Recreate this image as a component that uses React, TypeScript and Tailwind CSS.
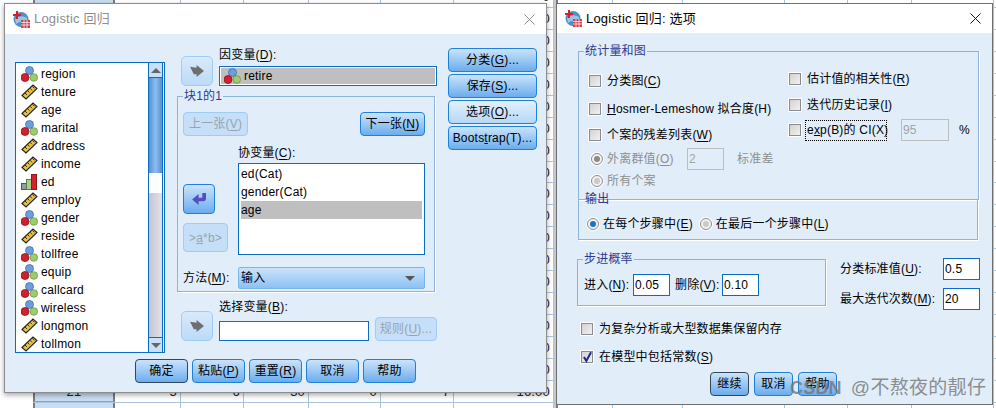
import React from "react";

const font = "font-['Liberation_Sans','Noto_Sans_CJK_SC',sans-serif] tracking-[0.2px]";

const sheetRows = Array.from({ length: 20 }, (_, i) => i);
const sheetColumns = ["w-[66px]", "w-[63px]", "w-[65px]", "w-[72px]", "w-[73px]", "w-[100px]"];
const sheetRight = ["w-[55px]", "w-[70px]", "w-[102px]", "w-[63px]", "w-[64px]", "w-[82px]"];

const BallsIcon = ({ className = "" }: { className?: string }) => (
  <svg viewBox="0 0 17 16" className={`w-[17px] h-[16px] shrink-0 ${className}`}>
    <circle cx="8.5" cy="4.5" r="4" fill="#6b9fdc" stroke="#3f6fb0" strokeWidth="0.8" />
    <circle cx="4" cy="11.5" r="4" fill="#d3202c" stroke="#8f1520" strokeWidth="0.8" />
    <circle cx="12.8" cy="11.5" r="3.8" fill="#9fcb6d" stroke="#6b9a45" strokeWidth="0.8" />
  </svg>
);

const RulerIcon = () => (
  <svg viewBox="0 0 17 16" className="w-[17px] h-[16px] shrink-0">
    <path d="M1 11.5 L12 1 L16 4.5 L5 15 Z" fill="#e8c23a" stroke="#222" strokeWidth="1.1" />
    <path d="M4 9 L6 11 M6.5 6.5 L8.5 8.5 M9 4.3 L11 6.3 M11.4 2.3 L13.4 4.3" stroke="#222" strokeWidth="0.9" />
  </svg>
);

const BarsIcon = () => (
  <svg viewBox="0 0 17 16" className="w-[17px] h-[16px] shrink-0">
    <rect x="0.5" y="9.5" width="5" height="6" fill="#8d9aa8" stroke="#4d5560" />
    <rect x="5.5" y="5.5" width="5" height="10" fill="#a8cf86" stroke="#5d7f45" />
    <rect x="10.5" y="0.5" width="5" height="15" fill="#d6202c" stroke="#8f1520" />
  </svg>
);

const variables: [string, "n" | "r" | "b"][] = [
  ["region", "n"],
  ["tenure", "r"],
  ["age", "r"],
  ["marital", "n"],
  ["address", "r"],
  ["income", "r"],
  ["ed", "b"],
  ["employ", "r"],
  ["gender", "n"],
  ["reside", "r"],
  ["tollfree", "n"],
  ["equip", "n"],
  ["callcard", "n"],
  ["wireless", "n"],
  ["longmon", "r"],
  ["tollmon", "r"],
];

const AppIcon = () => (
  <svg viewBox="0 0 17 17" className="w-[17px] h-[17px] shrink-0">
    <circle cx="8" cy="8.5" r="7.5" fill="#4f8fc4" />
    <path d="M2 8 Q8 3 14 7 L14 12 Q8 9 3 13 Z" fill="#9cc3e2" />
    <rect x="3" y="0" width="2" height="8" fill="#d3202c" />
    <rect x="0" y="3" width="8" height="2" fill="#d3202c" />
    <rect x="8" y="9" width="9" height="8" fill="#d3404c" />
    <path d="M8 11.5 H17 M8 14 H17 M11 9 V17 M14 9 V17" stroke="#fff" strokeWidth="0.7" />
  </svg>
);

const CloseIcon = ({ color }: { color: string }) => (
  <svg viewBox="0 0 11 11" className="w-[11px] h-[11px]">
    <path d="M0.5 0.5 L10.5 10.5 M10.5 0.5 L0.5 10.5" stroke={color} strokeWidth="1" />
  </svg>
);

// label with its underlined mnemonic, e.g. 保存(S)
const Mn = ({ before, k, after = "" }: { before: string; k: string; after?: string }) => (
  <span className="whitespace-nowrap">
    {before}(<u className="underline-offset-2">{k}</u>){after}
  </span>
);

const btnBase = "flex items-center justify-center rounded-[4px] border text-[12px] leading-none whitespace-nowrap";
const btnNormal = `${btnBase} h-[24px] border-[#1f80d8] bg-gradient-to-b from-[#cbe3fa] to-[#69adee] text-black`;
const btnDefault = `${btnBase} h-[24px] border-[#33465a] bg-gradient-to-b from-[#cbe3fa] to-[#69adee] text-black`;
const btnLight = `${btnBase} h-[24px] border-[#1f80d8] bg-gradient-to-b from-[#e3f0fc] to-[#b4d8f8] text-black`;
const btnOff = `${btnBase} h-[24px] border-[#a0ccf3] bg-[#c5dff8] text-[#9aa3ad]`;

const ArrowButton = ({ className = "" }: { className?: string }) => (
  <div className={`w-[32px] h-[30px] flex items-center justify-center rounded-[5px] border border-[#a0ccf3] bg-gradient-to-b from-[#d8eafb] to-[#bcdaf7] ${className}`}>
    <svg viewBox="0 0 16 14" className="w-[15px] h-[13px]">
      <path d="M0 2 L7 3 L7 0 L15 6.5 L7 13 L7 10 L4 10 Z" fill="#6e6e6e" />
    </svg>
  </div>
);

const Checkbox = ({ checked = false }: { checked?: boolean }) => (
  <div className="relative w-[12px] h-[12px] shrink-0 border border-[#8c8c8c] bg-gradient-to-br from-[#d2d2d2] to-[#f1f1f1] shadow-[0_0_0_1px_#fff]">
    {checked && (
      <svg viewBox="0 0 14 14" className="absolute -top-[1px] left-0 w-[11px] h-[12px]">
        <path d="M2.5 7 L5.5 12 L11.5 1" fill="none" stroke="#1f2a8c" strokeWidth="2.6" />
      </svg>
    )}
  </div>
);

const Radio = ({ on = false, off = false }: { on?: boolean; off?: boolean }) => (
  <div className="w-[12px] h-[12px] shrink-0 flex items-center justify-center rounded-full border border-[#8c8c8c] bg-[#f2f2f2] shadow-[0_0_0_1px_#fff]">
    <div className={`w-[6px] h-[6px] rounded-full ${on ? (off ? "bg-[#8a8a8a]" : "bg-[#1a73c9]") : "bg-[#c9c9c9]"}`} />
  </div>
);

const NumBox = ({ value, off = false, className = "w-[37px]" }: { value: string; off?: boolean; className?: string }) => (
  <div className={`h-[22px] flex items-center pl-[1px] text-[12px] shrink-0 ${className} ${off ? "border border-[#bdbdbd] text-[#a3a3a3]" : "border border-[#0b6cc4] bg-white text-black"}`}>
    {value}
  </div>
);

const Group = ({ title, className = "", children }: { title: string; className?: string; children: React.ReactNode }) => (
  <fieldset className={`border border-[#8db4da] shadow-[1px_1px_0_#fff] ${className}`}>
    <legend className="ml-[5px] px-[1px] h-[16px] leading-[16px] text-[12px] text-[#2e3a8c]">{title}</legend>
    {children}
  </fieldset>
);

const Sheet = () => (
  <div className="absolute inset-0 overflow-hidden bg-white text-[13px] text-[#222]">
    <div className="-mt-[14px] ml-[33px]">
      {sheetRows.map((i) => (
        <div key={i} className="flex h-[21.94px] border-b border-[#a9c4de]">
          <div className="w-[82px] border-x-2 border-x-[#7b7b7b] bg-[#c9ddf2] border-b border-b-[#7fa6cc] text-center leading-[21px]">{i === 18 ? "21" : ""}</div>
          {sheetColumns.map((w, c) => (
            <div key={w + c} className={`${w} border-r border-[#a9c4de] text-right pr-[3px] leading-[21px]`}>
              {i === 18 ? ["5", "6", "30", "0", "7", "16.00"][c] : c === 5 ? "0" : ""}
            </div>
          ))}
          <div className="w-[4px] bg-[#c8c8c8] border-r-2 border-[#7b7b7b]" />
          {sheetRight.map((w, c) => (
            <div key={w + c} className={`${w} border-r border-[#a9c4de]`} />
          ))}
        </div>
      ))}
    </div>
  </div>
);

const TitleBar = ({ title, titleClass, closeColor, h }: { title: string; titleClass: string; closeColor: string; h: string }) => (
  <div className={`${h} bg-white flex items-center pl-[8px] pr-[11px]`}>
    <AppIcon />
    <span className={`ml-[4px] text-[13px] ${titleClass}`}>{title}</span>
    <div className="ml-auto flex">
      <CloseIcon color={closeColor} />
    </div>
  </div>
);

const LogisticDialog = () => (
  <div className="absolute left-[4px] top-[3px] w-[543px] h-[390px] bg-[#e1eefa] border border-[#8d8d8d] shadow-[0_2px_5px_rgba(0,0,0,0.35)]">
    <TitleBar title="Logistic 回归" titleClass="text-[#8d8d8d]" closeColor="#8f8f8f" h="h-[30px]" />
    <div className="flex h-[325px]">
      {/* variable list */}
      <div className="ml-[10px] mt-[28px] w-[150px] h-[291px] border-[1.5px] border-[#0b6cc4] bg-white flex">
        <div className="flex-1 pt-[2px] overflow-hidden">
          {variables.map(([name, kind]) => (
            <div key={name} className="flex items-center h-[18px] pl-[5px] gap-[3px] text-[12px] text-black">
              {kind === "n" && <BallsIcon />}
              {kind === "r" && <RulerIcon />}
              {kind === "b" && <BarsIcon />}
              <span>{name}</span>
            </div>
          ))}
        </div>
        <div className="w-[15px] mr-[1px] flex flex-col border-x border-[#0b6cc4] bg-[#d6d6e2]">
          <div className="h-[15px] bg-[#c9e0f8] flex items-center justify-center border-b border-[#0b6cc4]">
            <div className="w-0 h-0 border-x-[5px] border-x-transparent border-b-[5px] border-b-[#666]" />
          </div>
          <div className="h-[95px] bg-gradient-to-r from-[#4f93d8] via-[#8fbdea] to-[#4f93d8]" />
          <div className="h-[20px] bg-white" />
          <div className="flex-1 bg-gradient-to-r from-[#c6c6d4] to-[#e2e2ea]" />
          <div className="h-[15px] bg-[#c9e0f8] flex items-center justify-center border-t border-[#0b6cc4]">
            <div className="w-0 h-0 border-x-[5px] border-x-transparent border-t-[5px] border-t-[#666]" />
          </div>
        </div>
      </div>

      {/* middle */}
      <div className="ml-[12px] w-[260px] flex flex-col text-[12px]">
        <div className="flex h-[54px] pt-[12px] shrink-0">
          <ArrowButton className="ml-[4px] mt-[10px]" />
          <div className="ml-[6px]">
            <div className="h-[20px] leading-[18px]"><Mn before="因变量" k="D" after=":" /></div>
            <div className="w-[218px] h-[20px] border border-[#0b6cc4] p-[1px] bg-white">
              <div className="h-full bg-[#bfbfbf] flex items-center pl-[3px] gap-[3px]">
                <BallsIcon />
                <span>retire</span>
              </div>
            </div>
          </div>
        </div>

        <Group title="块1的1" className="w-[258px] h-[204px] shrink-0">
          <div className="flex justify-between ml-[5px] mr-[9px] mt-[8px]">
            <div className={`${btnOff} w-[65px]`}><Mn before="上一张" k="V" /></div>
            <div className={`${btnNormal} w-[65px]`}><Mn before="下一张" k="N" /></div>
          </div>
          <div className="flex ml-[5px]">
            <div className="w-[55px] pt-[48px] flex flex-col">
              <div className="w-[32px] h-[30px] flex items-center justify-center rounded-[4px] border border-[#1f80d8] bg-gradient-to-b from-[#cbe3fa] to-[#69adee]">
                <svg viewBox="0 0 16 14" className="w-[15px] h-[13px]">
                  <path d="M15 0 L15 6 Q15 9 12 9 L7 9 L7 13 L0 7 L7 1 L7 5 L11 5 L11 0 Z" fill="#5250c0" />
                </svg>
              </div>
              <div className={`${btnBase} mt-[9px] w-[45px] h-[29px] border-[#a0ccf3] bg-[#c5dff8] text-[#9aa3ad]`}>&gt;<u>a</u>*b&gt;</div>
            </div>
            <div className="pt-[9px]">
              <div className="h-[18px] leading-[16px]"><Mn before="协变量" k="C" after=":" /></div>
              <div className="w-[187px] h-[92px] border border-[#0b6cc4] bg-white pt-[1px] pl-[2px] pr-[2px]">
                <div className="h-[18px] leading-[18px]">ed(Cat)</div>
                <div className="h-[18px] leading-[18px]">gender(Cat)</div>
                <div className="h-[18px] leading-[18px] bg-[#bfbfbf]">age</div>
              </div>
            </div>
          </div>
          <div className="flex items-center ml-[5px] mt-[12px]">
            <div className="w-[55px]"><Mn before="方法" k="M" after=":" /></div>
            <div className="w-[187px] h-[22px] rounded-[2px] border border-[#7ab6ee] bg-gradient-to-b from-[#cbe3fa] to-[#8cc1f2] flex items-center pl-[2px] pr-[9px] justify-between">
              <span>输入</span>
              <div className="w-0 h-0 border-x-[5px] border-x-transparent border-t-[5px] border-t-[#555]" />
            </div>
          </div>
        </Group>

        <div className="flex">
          <ArrowButton className="ml-[4px] mt-[19px]" />
          <div className="ml-[6px] pt-[6px]">
            <div className="h-[18px] leading-[18px]"><Mn before="选择变量" k="B" after=":" /></div>
            <div className="flex items-end mt-[1px]">
              <div className="w-[150px] h-[20px] border border-[#0b6cc4] bg-white" />
              <div className={`${btnOff} ml-[6px] w-[62px]`}><Mn before="规则" k="U" />...</div>
            </div>
          </div>
        </div>
      </div>

      {/* side buttons */}
      <div className="ml-[11px] mt-[14px] w-[89px] flex flex-col gap-[2px]">
        <div className={btnNormal}><Mn before="分类" k="G" />...</div>
        <div className={btnNormal}><Mn before="保存" k="S" />...</div>
        <div className={btnLight}><Mn before="选项" k="O" />...</div>
        <div className={btnNormal}><span>Boots<u>t</u>rap(T)...</span></div>
      </div>
    </div>
    <div className="flex gap-[4px] pl-[130px]">
      <div className={`${btnDefault} w-[53px]`}>确定</div>
      <div className={`${btnNormal} w-[53px]`}><Mn before="粘贴" k="P" /></div>
      <div className={`${btnNormal} w-[53px]`}><Mn before="重置" k="R" /></div>
      <div className={`${btnNormal} w-[53px]`}>取消</div>
      <div className={`${btnNormal} w-[53px]`}>帮助</div>
    </div>
  </div>
);

const OptionsDialog = () => (
  <div className="absolute left-[556px] top-[3px] w-[437px] h-[402px] bg-[#e1eefa] border border-[#6f6f6f] text-[12px] text-black">
    <TitleBar title="Logistic 回归: 选项" titleClass="text-black" closeColor="#111" h="h-[29px]" />
    <Group title="统计量和图" className="ml-[21px] mt-[10px] w-[401px] h-[157px]">
      <div className="flex">
        <div className="w-[200px] ml-[10px] pt-[9px]">
          <div className="flex items-center h-[26px] gap-[6px]"><Checkbox /><Mn before="分类图" k="C" /></div>
          <div className="flex items-center h-[27px] mt-[1px] gap-[6px]"><Checkbox /><span className="whitespace-nowrap"><u>H</u>osmer-Lemeshow 拟合度(H)</span></div>
          <div className="flex items-center h-[26px] gap-[6px]"><Checkbox /><Mn before="个案的残差列表" k="W" /></div>
          <div className="flex items-center h-[22px] text-[#8f8f8f]">
            <div className="ml-[2px]"><Radio on off /></div>
            <span className="ml-[4px] w-[80px]"><Mn before="外离群值" k="O" /></span>
            <NumBox value="2" off />
            <span className="ml-[13px]">标准差</span>
          </div>
          <div className="flex items-center h-[22px] text-[#8f8f8f]">
            <div className="ml-[2px]"><Radio /></div>
            <span className="ml-[4px]">所有个案</span>
          </div>
        </div>
        <div className="pt-[7px]">
          <div className="flex items-center h-[26px] gap-[6px]"><Checkbox /><Mn before="估计值的相关性" k="R" /></div>
          <div className="flex items-center h-[25px] gap-[6px]"><Checkbox /><Mn before="迭代历史记录" k="I" /></div>
          <div className="flex items-center h-[26px]">
            <Checkbox />
            <span className="ml-[4px] w-[82px] h-[21px] leading-[19px] pl-[1px] border border-dotted border-black whitespace-nowrap">e<u>x</u>p(B)的 CI(X)</span>
            <NumBox value="95" off className="ml-[14px] w-[48px]" />
            <span className="ml-[10px]">%</span>
          </div>
        </div>
      </div>
    </Group>
    <Group title="输出" className="ml-[21px] -mt-[9px] w-[400px] h-[49px] border-[1.5px] border-[#7aa8d6]">
      <div className="flex items-center h-[18px] mt-[8px] ml-[8px]">
        <Radio on />
        <span className="ml-[4px]"><Mn before="在每个步骤中" k="E" /></span>
        <div className="ml-[7px]"><Radio /></div>
        <span className="ml-[4px]"><Mn before="在最后一个步骤中" k="L" /></span>
      </div>
    </Group>
    <div className="flex mt-[11px]">
      <Group title="步进概率" className="ml-[20px] w-[249px] h-[55px]">
        <div className="flex items-center mt-[7px] ml-[6px]">
          <span className="w-[49px]"><Mn before="进入" k="N" after=":" /></span>
          <NumBox value="0.05" />
          <span className="ml-[5px] w-[47px]"><Mn before="删除" k="V" after=":" /></span>
          <NumBox value="0.10" />
        </div>
      </Group>
      <div className="ml-[14px] pt-[7px] flex flex-col gap-[8px]">
        <div className="flex items-center">
          <span className="w-[103px]"><Mn before="分类标准值" k="U" after=":" /></span>
          <NumBox value="0.5" />
        </div>
        <div className="flex items-center">
          <span className="w-[103px]"><Mn before="最大迭代次数" k="M" after=":" /></span>
          <NumBox value="20" />
        </div>
      </div>
    </div>
    <div className="flex items-center h-[20px] ml-[24px] mt-[9px] gap-[6px]"><Checkbox />为复杂分析或大型数据集保留内存</div>
    <div className="flex items-center h-[20px] ml-[24px] mt-[8px] gap-[6px]"><Checkbox checked /><Mn before="在模型中包括常数" k="S" /></div>
    <div className="flex gap-[5px] ml-[153px] mt-[5px]">
      <div className={`${btnDefault} w-[39px]`}>继续</div>
      <div className={`${btnNormal} w-[39px]`}>取消</div>
      <div className={`${btnNormal} w-[39px]`}>帮助</div>
    </div>
    {/* watermark lies over the buttons */}
    <div className="absolute left-[233px] top-[371px] flex items-center h-[26px] text-[#767676] opacity-80 whitespace-nowrap">
      <span className="text-[18px] font-bold">CSDN</span>
      <span className="ml-[9px] text-[19px] tracking-[0.3px]">@不熬夜的靓仔</span>
    </div>
  </div>
);

export default function App() {
  return (
    <div className={`relative w-[996px] h-[408px] overflow-hidden ${font}`}>
      <Sheet />
      <LogisticDialog />
      <OptionsDialog />
    </div>
  );
}
